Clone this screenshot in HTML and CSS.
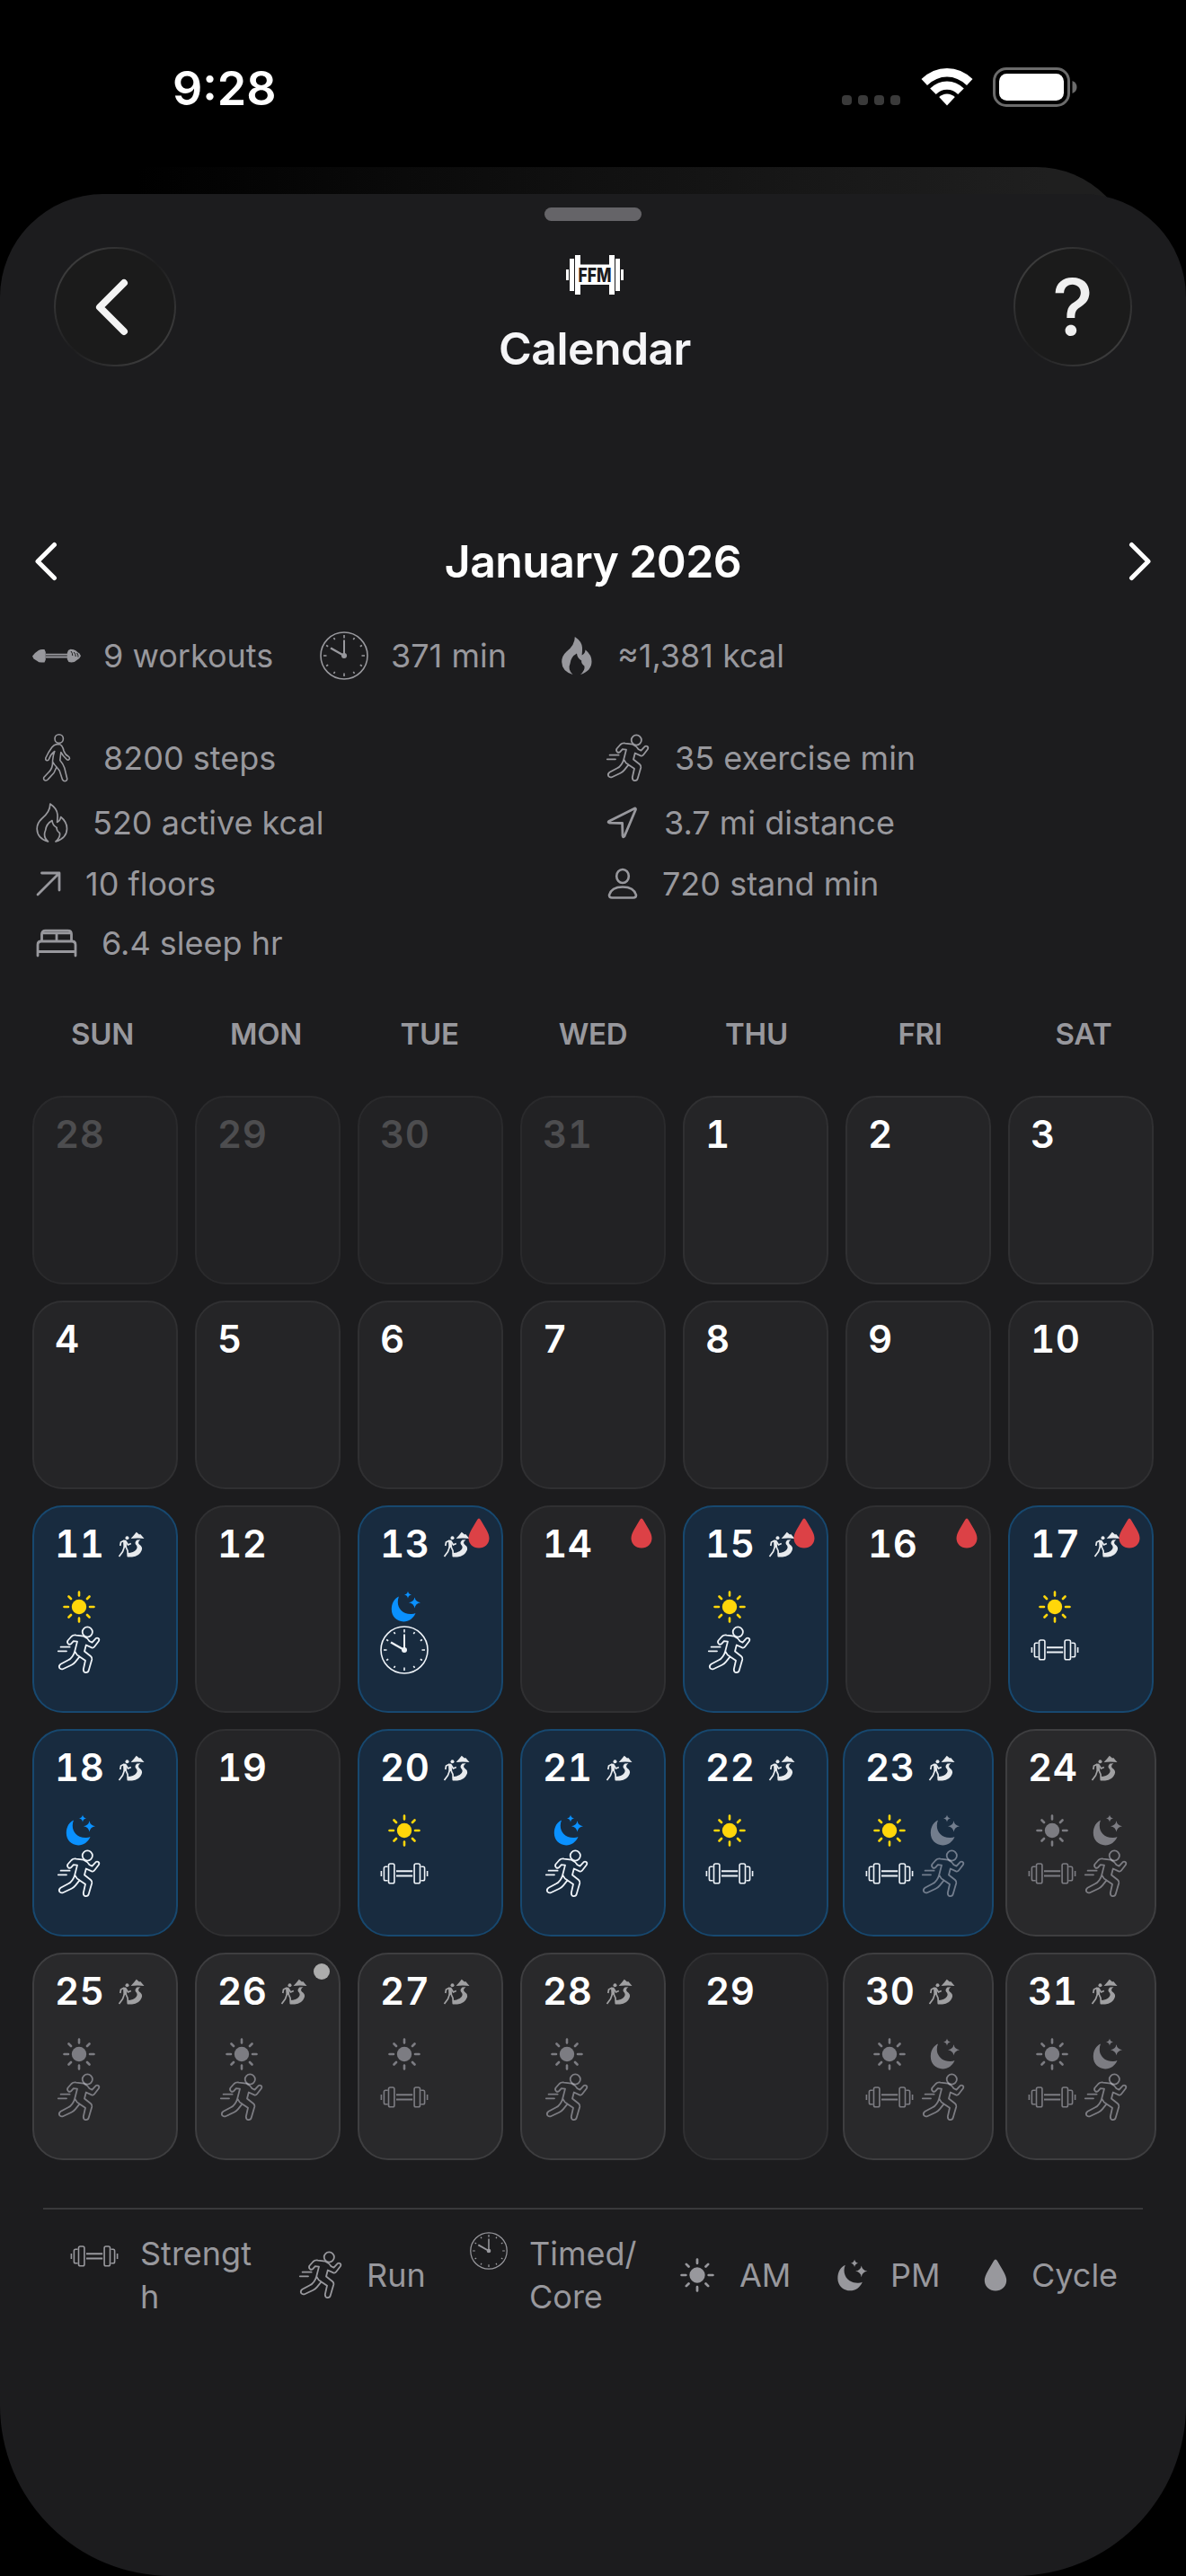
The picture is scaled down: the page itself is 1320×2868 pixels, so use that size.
FILE: index.html
```
<!DOCTYPE html>
<html lang="en">

<head>
    <meta charset="UTF-8">
    <meta name="viewport" content="width=device-width, initial-scale=1.0">
    <title>Calendar</title>
    <link rel="stylesheet" href="styles.css">
</head>

<body>

    <!-- icon set -->
    <svg class="sprite" xmlns="http://www.w3.org/2000/svg">
        <symbol id="run" viewBox="0 0 54 54">
            <g fill="none" stroke="currentColor" stroke-width="1.8" stroke-linejoin="round" stroke-linecap="round">
                <circle cx="36.3" cy="7" r="5.6" />
                <path d="M32 11.6 L24 10.6 Q20.500 10 18.500 12 L14.500 16.500 Q13.300 18.600 15 20.200 Q16.800 21.600 18.400 19.800 L20.800 17.200 L25 17.600 L22.200 28.500 Q21.500 31.500 19.500 34.200 Q17.500 37.200 14.500 38.500 L6.500 42.800 Q4 44.500 5.200 47 Q6.800 49.200 9.500 48 L18.500 43.800 Q21 42.600 22.800 40.400 L27.600 34.400 M22.600 29 Q24 32.600 27.600 34.400 L34 38.800 L31.800 48.500 Q31.800 52 34.600 52.200 Q37.200 52 37.800 49.500 L41.300 37.500 Q41.700 35.500 40 34 L33 28.500 L34.800 21.500 L41 24.400 Q42.800 25 44 23.500 L49 17 Q50 14.800 48 13.800 Q46 13.200 45 14.800 L41.500 18.600 L38.600 17.200 Q36.500 13.500 32 11.600" />
                <path d="M6.600 23.700 H16.600 M3.800 28.300 H13" />
            </g>
        </symbol>
        <symbol id="walk" viewBox="0 0 54 54">
            <g fill="none" stroke="currentColor" stroke-width="1.6" stroke-linejoin="round" stroke-linecap="round">
                <circle cx="29.700" cy="5.500" r="4.700" />
                <path d="M27 11.600 Q24 12 21.800 15 Q18 20 14.800 27 Q14.500 29.600 16.500 29.800 Q18 29.800 18.600 28 Q20.500 22.500 24.800 19.500 Q23 24 22.600 29.500 L22.400 34.500 Q21.500 40 17.500 43.500 L12.800 48.500 Q12 51.500 14.600 52 Q16.400 52.200 17.500 50.600 L24 43.500 L27 37 L30.200 41 L33.500 51 Q34.800 53.200 37 52.600 Q39.200 51.800 38.600 49.500 L35.800 38 Q34 33 30.800 29.500 L31.800 20.500 L34.500 24.500 L38.500 28.800 Q40.600 29.800 41.400 27.800 Q41.600 26.300 40.500 25.400 Q36.500 23.500 35 19 Q33.500 12 29.500 11.500 Z M22.600 31 Q24 34 27 37" />
            </g>
        </symbol>
        <symbol id="clock" viewBox="0 0 54 54">
            <g fill="none" stroke="currentColor" stroke-width="1.6">
                <circle cx="27" cy="27" r="26" />
                <path d="M27 4 V7.500 M27 46.500 V50 M4 27 H7.500 M46.500 27 H50 M15.500 7.100 L16.700 9.200 M37.300 44.800 L38.500 46.900 M7.100 15.500 L9.200 16.700 M44.800 37.300 L46.900 38.500 M38.500 7.100 L37.300 9.200 M16.700 44.800 L15.500 46.900 M46.900 15.500 L44.800 16.700 M9.200 37.300 L7.100 38.500" />
                <path d="M27 27 V9.500" stroke-width="2" />
                <path d="M27 27 L12 18.500" stroke-width="2.400" />
            </g>
            <circle cx="27" cy="27" r="3" fill="currentColor" />
        </symbol>
        <symbol id="lift" viewBox="0 0 54 54">
            <g fill="none" stroke="currentColor" stroke-width="1.600">
                <rect x="9.500" y="16" width="6.400" height="21.800" rx="1.800" />
                <rect x="38.100" y="16" width="6.400" height="21.800" rx="1.800" />
                <path d="M8.600 19.200 H6 Q4.400 19.200 4.400 21 V33 Q4.400 34.800 6 34.800 H8.600 M45.400 19.200 H48 Q49.600 19.200 49.600 21 V33 Q49.600 34.800 48 34.800 H45.400 M1.400 24 V30 M52.600 24 V30" />
                <path d="M18 24.200 H36.200 M18 29.600 H36.200" stroke-width="2" />
            </g>
        </symbol>
        <symbol id="dumbbell" viewBox="0 0 54 16">
            <g fill="currentColor">
                <path d="M0 8.500 L3 5 L7 2 Q9 1 11 1 L13.500 1 L14.800 4 V12.500 L13.500 15.500 H10 Q7 15.500 5.500 14 L1.500 11.500 Z" />
                <path d="M15 5.800 H39 V7.400 H15 Z M15 8.600 H39 V10.400 H15 Z" />
                <path d="M40 2 L42.500 .8 L46 1.200 Q49 2 50.500 4.200 L52.500 5.400 L54 8.300 L52.300 11 L49.500 13 Q47 15.600 43.500 15.600 L40.500 15 L38.800 12 V5 Z" />
            </g>
            <path d="M43 3 Q44.800 5 44.800 8 M46.200 4 Q48.300 6 48.300 9 M49.600 5 Q51.200 7 51 9.500" fill="none" stroke="#1c1c1e" stroke-width="1" />
        </symbol>
        <symbol id="flame" viewBox="0 0 36 44">
            <path d="M15.800 1 Q23.500 6 24 13 Q24.200 17 23.600 21.500 Q27 20 27.600 15.500 Q34.500 21 34.500 28.500 Q34.500 39 22 43 Q27.500 38 26.400 33.500 Q22.500 30.500 23.200 27.500 Q18.500 25 18 19.500 Q11.500 23 10.600 30.500 Q7.500 37.500 13.500 43 Q1.500 39.500 1.200 29 Q1 22.500 6.500 17.500 Q16 10 15.800 1 Z" />
        </symbol>
        <symbol id="arrow" viewBox="0 0 28 28">
            <path d="M2 26 L25.500 2.500 M6.500 2 H26 V21" fill="none" stroke="currentColor" stroke-width="2.800" stroke-linecap="round" stroke-linejoin="round" />
        </symbol>
        <symbol id="bed" viewBox="0 0 46 32">
            <g fill="none" stroke="currentColor" stroke-width="2.800" stroke-linecap="round" stroke-linejoin="round">
                <path d="M2 30 V18 Q2 14 6 14 H40 Q44 14 44 18 V30 M2 25.500 H44" />
                <path d="M6.500 13 V6 Q6.500 2.200 10.500 2.200 H35.500 Q39.500 2.200 39.500 6 V13" />
                <path d="M8 4.800 H38 M23 5 V13" />
            </g>
        </symbol>
        <symbol id="nav" viewBox="0 0 34 36">
            <path d="M31.500 2 Q32.800 2 32.400 3.500 L20 33 Q18.500 35 18 32.500 L17.600 18.500 L3.500 18.200 Q1 17.600 3 16.200 Z" fill="none" stroke="currentColor" stroke-width="2.800" stroke-linejoin="round" />
        </symbol>
        <symbol id="person" viewBox="0 0 34 36">
            <g fill="none" stroke="currentColor" stroke-width="2.600">
                <ellipse cx="17" cy="9.500" rx="6.800" ry="7.500" />
                <path d="M5 33.500 Q2 33.500 2 30.500 Q4.500 21.500 17 21.500 Q29.500 21.500 32 30.500 Q32 33.500 29 33.500 Z" />
            </g>
        </symbol>
        <symbol id="sun" viewBox="0 0 36 36">
            <circle cx="18" cy="18" r="8.200" fill="currentColor" />
            <path d="M18 1.500 V5.500 M18 30.500 V34.500 M1.500 18 H6 M30 18 H34.500 M6.500 6.500 L9 9 M27 27 L29.500 29.500 M29.500 6.500 L27 9 M9 27 L6.500 29.500" stroke="currentColor" stroke-width="2.600" stroke-linecap="round" />
        </symbol>
        <symbol id="moon" viewBox="0 0 34 36">
            <g fill="currentColor">
                <path d="M9 6.500 C5 16 11 26.500 23 26 Q25.500 25.800 27.500 25 C25 31 20 34.400 14.200 34.400 C6.500 34.400 .8 28.500 .8 20.800 C.8 14 4 8.600 9 6.500 Z" />
                <path d="M26.500 7.200 Q27.300 12.200 33 13.200 Q27.300 14.200 26.500 19.600 Q25.700 14.200 20 13.200 Q25.700 12.200 26.500 7.200 Z" />
                <path d="M19 .5 Q19.500 4 23 4.600 Q19.500 5.200 19 8.800 Q18.500 5.200 15 4.600 Q18.500 4 19 .5 Z" />
            </g>
        </symbol>
        <symbol id="drop" viewBox="0 0 24 34">
            <path d="M12 .5 Q13 .5 13.800 2 L20 12.500 Q23.500 18.500 23.500 22.500 C23.500 29 18.500 33.500 12 33.500 S.5 29 .5 22.500 Q.5 18.500 4 12.500 L10.200 2 Q11 .5 12 .5 Z" fill="currentColor" />
        </symbol>
        <symbol id="hike" viewBox="0 0 30 30">
            <g fill="currentColor">
                <path d="M14.600 8 L18.200 4 L20.800 .8 L24 3.500 L25.200 3 L29.500 8 Q22 7.200 14.600 8 Z" />
                <path d="M21.500 9.500 L25.500 9.300 Q21.500 12 24 14.500 Q28.500 17.500 26.500 21.500 Q24 27.800 16 28.500 L10.800 28.500 L10.600 24 Q18 24 20.800 20 Q22.800 17 20 14.500 Q18.500 12 21.500 9.500 Z" />
                <circle cx="10.500" cy="7.300" r="2" />
                <path d="M6 9.600 L9.500 9.800 L10.200 17.500 L6.500 18 Z" />
            </g>
            <path d="M6.500 10.500 L3.500 12 L2.800 16 M9 11 L11.500 15 L14.800 13.500 M7.500 17 L5.500 22.500 L1.500 28 M9 17 L11 21.500 L11.500 28" fill="none" stroke="currentColor" stroke-width="1.700" />
        </symbol>
    </svg>

    <div class="statusbar">
        <span class="time">9:28</span>
        <div class="signals">
            <div class="cell-dots"><i></i><i></i><i></i><i></i></div>
            <svg class="wifi" viewBox="0 0 58 42">
                <path d="M29 0 Q45 0 57.500 12 L51 19 Q41 9.500 29 9.500 Q17 9.500 7 19 L.5 12 Q13 0 29 0 Z" fill="#fff" />
                <path d="M29 14.500 Q39.500 14.500 47.800 22.500 L41.200 29 Q36 23.800 29 23.800 Q22 23.800 16.800 29 L10.200 22.500 Q18.500 14.500 29 14.500 Z" fill="#fff" />
                <path d="M29 28.500 Q34 28.500 37.800 32 L29 41.500 L20.200 32 Q24 28.500 29 28.500 Z" fill="#fff" />
            </svg>
            <svg class="battery" viewBox="0 0 94 44">
                <rect x="1.500" y="1.500" width="83" height="41" rx="13.500" fill="none" stroke="#6b6b6b" stroke-width="3" />
                <rect x="7" y="7" width="72" height="30" rx="8.500" fill="#fff" />
                <path d="M88.500 15 Q93.500 17 93.500 22 Q93.500 27 88.500 29 Z" fill="#6b6b6b" />
            </svg>
        </div>
    </div>

    <div class="back-sheet"></div>

    <div class="sheet">
        <div class="handle"></div>

        <div class="header">
            <div class="round wide">
                <svg class="chev-big" viewBox="0 0 38 64"><path d="M33 5 L6 32 L33 59" /></svg>
            </div>
            <div class="brand">
                <svg class="logo" viewBox="0 0 64 44">
                    <path fill="#fff" d="M0 16 H3 V28 H0 Z M4 4 H9 V40 H4 Z M10 0 H16 V10.500 H48 V0 H54 V44 H48 V33 H16 V44 H10 Z M55 4 H60 V40 H55 Z M61 16 H64 V28 H61 Z" />
                    <text x="32" y="30" text-anchor="middle" textLength="37" lengthAdjust="spacingAndGlyphs">FFM</text>
                </svg>
                <h1>Calendar</h1>
            </div>
            <div class="round"><span class="help">?</span></div>
        </div>

        <div class="month">
            <svg class="chev" viewBox="0 0 26 44"><path d="M22.500 3.500 L4 22 L22.500 40.500" /></svg>
            <h2>January 2026</h2>
            <svg class="chev" viewBox="0 0 26 44"><path d="M3.500 3.500 L22 22 L3.500 40.500" /></svg>
        </div>

        <div class="totals">
            <div class="stat box"><svg class="i-dumbbell"><use href="#dumbbell" /></svg><span>9 workouts</span></div>
            <div class="stat box"><svg class="i54"><use href="#clock" /></svg><span>371 min</span></div>
            <div class="stat"><svg class="i-flame solid"><use href="#flame" /></svg><span>≈1,381 kcal</span></div>
        </div>

        <div class="health">
            <div class="stat box"><svg class="i54"><use href="#walk" /></svg><span>8200 steps</span></div>
            <div class="stat box"><svg class="i54"><use href="#run" /></svg><span>35 exercise min</span></div>
            <div class="stat in"><svg class="i-flame line"><use href="#flame" /></svg><span>520 active kcal</span></div>
            <div class="stat nav"><svg class="i-small"><use href="#nav" /></svg><span>3.7 mi distance</span></div>
            <div class="stat in"><svg class="i-arrow"><use href="#arrow" /></svg><span>10 floors</span></div>
            <div class="stat in"><svg class="i-small"><use href="#person" /></svg><span>720 stand min</span></div>
            <div class="stat in"><svg class="i-bed"><use href="#bed" /></svg><span>6.4 sleep hr</span></div>
        </div>

        <div class="weekdays">
            <span>SUN</span><span>MON</span><span>TUE</span><span>WED</span><span>THU</span><span>FRI</span><span>SAT</span>
        </div>

        <div class="grid" id="grid"></div>

        <div class="legend">
            <div class="item"><svg class="i54 top"><use href="#lift" /></svg><span>Strengt<br>h</span></div>
            <div class="item"><svg class="i54"><use href="#run" /></svg><span>Run</span></div>
            <div class="item timed"><svg class="i42 top"><use href="#clock" /></svg><span>Timed/<br>Core</span></div>
            <div class="item am"><svg class="i-sun"><use href="#sun" /></svg><span>AM</span></div>
            <div class="item"><svg class="i-moon"><use href="#moon" /></svg><span>PM</span></div>
            <div class="item cyc"><svg class="i-drop"><use href="#drop" /></svg><span>Cycle</span></div>
        </div>
    </div>

    <script>
        let grid = document.getElementById("grid");

        // workouts: [time of day, type, "plan" when not done yet]
        let days = {
            11: { done: true, work: [["sun", "run"]] },
            13: { done: true, cycle: true, work: [["moon", "clock"]] },
            14: { cycle: true },
            15: { done: true, cycle: true, work: [["sun", "run"]] },
            16: { cycle: true },
            17: { done: true, cycle: true, work: [["sun", "lift"]] },
            18: { done: true, work: [["moon", "run"]] },
            20: { done: true, work: [["sun", "lift"]] },
            21: { done: true, work: [["moon", "run"]] },
            22: { done: true, work: [["sun", "lift"]] },
            23: { done: true, work: [["sun", "lift"], ["moon", "run", "plan"]] },
            24: { work: [["sun", "lift", "plan"], ["moon", "run", "plan"]] },
            25: { work: [["sun", "run", "plan"]] },
            26: { today: true, work: [["sun", "run", "plan"]] },
            27: { work: [["sun", "lift", "plan"]] },
            28: { work: [["sun", "run", "plan"]] },
            30: { work: [["sun", "lift", "plan"], ["moon", "run", "plan"]] },
            31: { work: [["sun", "lift", "plan"], ["moon", "run", "plan"]] }
        };

        function icon(name, cls) {
            return `<svg class="${cls}"><use href="#${name}" /></svg>`;
        }

        function addDay(num, day, out) {
            let cls = "day";
            if (out) cls += " out";
            if (day.done) cls += " done";
            else if (day.work) cls += " planned";
            if (day.work && day.work.length > 1) cls += " double";

            let html = `<div class="top-row"><b>${num}</b>${day.work ? icon("hike", "hike") : ""}</div>`;
            if (day.work) {
                html += `<div class="works">`;
                day.work.forEach(function(w) {
                    html += `<div class="work ${w[2] || ""}">${icon(w[0], w[0])}${icon(w[1], "i54")}</div>`;
                });
                html += `</div>`;
            }
            if (day.cycle) html += icon("drop", "cycle");
            if (day.today) html += `<i class="dot"></i>`;
            grid.innerHTML += `<div class="${cls}">${html}</div>`;
        }

        for (let i = 28; i <= 31; i++) addDay(i, {}, true);
        for (let i = 1; i <= 31; i++) addDay(i, days[i] || {}, false);
    </script>
</body>

</html>
```
FILE: styles.css
```
* {
    margin: 0;
    padding: 0;
    box-sizing: border-box;
}

body {
    width: 1320px;
    height: 2868px;
    overflow: hidden;
    background: #000;
    color: #fff;
    font-family: Inter, "Liberation Sans", sans-serif;
}

svg {
    display: block;
    flex: none;
}

.sprite {
    width: 0;
    height: 0;
    position: absolute;
}

/* status bar */
.statusbar {
    height: 186px;
    padding: 68px 121px 58px 192px;
    display: flex;
    justify-content: space-between;
    align-items: center;
}

.time {
    font-size: 52px;
    font-weight: 600;
}

.signals {
    display: flex;
    align-items: center;
    margin-top: -3px;
}

.cell-dots {
    display: flex;
    gap: 7px;
    margin: 30px 23px 0 0;
}

.cell-dots i {
    width: 11px;
    height: 11px;
    border-radius: 4px;
    background: #3a3a3a;
}

.wifi {
    width: 58px;
    height: 42px;
    margin-right: 22px;
}

.battery {
    width: 94px;
    height: 44px;
}

/* sheets */
.back-sheet {
    height: 130px;
    margin: 0 57px;
    border-radius: 110px 110px 0 0;
    background: linear-gradient(90deg, #000 8%, #0d0d0d 40%, #1f1f1f 92%);
}

.sheet {
    position: relative;
    height: 2652px;
    margin-top: -100px;
    padding-top: 15px;
    border-radius: 115px 115px 190px 190px;
    background: #1c1c1e;
}

.handle {
    width: 108px;
    height: 15px;
    margin: 0 auto;
    border-radius: 8px;
    background: #656468;
}

.header {
    height: 143px;
    margin-top: 29px;
    padding: 0 60px;
    display: flex;
    justify-content: space-between;
}

.round {
    width: 132px;
    height: 133px;
    border-radius: 67px;
    border: 2px solid transparent;
    background: linear-gradient(#1b1b1b, #1b1b1b) padding-box, linear-gradient(135deg, #444 5%, #2a2a2b 35%, #1e1e1f 50%, #2a2a2b 65%, #444 95%) border-box;
    display: flex;
    justify-content: center;
    align-items: center;
}

.round.wide {
    width: 136px;
}

.chev-big {
    width: 38px;
    height: 64px;
    margin-right: 9px;
    fill: none;
    stroke: #f4f4f4;
    stroke-width: 8;
    stroke-linecap: round;
    stroke-linejoin: round;
}

.help {
    font-size: 86px;
    font-weight: 500;
    color: #f0f0f0;
}

.brand {
    display: flex;
    flex-direction: column;
    align-items: center;
    padding-top: 9px;
}

.logo {
    width: 64px;
    height: 44px;
}

.logo text {
    font-size: 22px;
    font-weight: 800;
    fill: #1c1c1e;
}

h1,
h2 {
    font-size: 50px;
    line-height: 60px;
    font-weight: 600;
    letter-spacing: -0.6px;
}

h1 {
    margin-top: 30px;
    color: #f5f5f7;
}

.month {
    height: 60px;
    margin-top: 177px;
    padding: 0 38px;
    display: flex;
    justify-content: space-between;
    align-items: center;
}

.chev {
    width: 26px;
    height: 44px;
    fill: none;
    stroke: #fff;
    stroke-width: 5;
    stroke-linecap: round;
    stroke-linejoin: round;
}

/* stats */
.totals {
    height: 54px;
    margin: 48px 36px 0;
    display: grid;
    grid-template-columns: 320px 268px auto;
}

.health {
    margin: 60px 36px 0;
    display: grid;
    grid-template-columns: 636px auto;
    grid-template-rows: 54px 48px 45px 45px;
    row-gap: 21px;
}

.stat {
    display: flex;
    align-items: center;
    gap: 27px;
    font-size: 36px;
    color: #98989d;
    white-space: nowrap;
}

.stat.box {
    gap: 25px;
}

.stat.in {
    padding-left: 4px;
}

.stat.nav {
    padding-left: 3px;
    gap: 30px;
}

.i54 {
    width: 54px;
    height: 54px;
}

.i42 {
    width: 42px;
    height: 42px;
}

.i-dumbbell {
    width: 54px;
    height: 16px;
}

.i-flame {
    width: 36px;
    height: 44px;
}

.solid {
    fill: currentColor;
}

.line {
    fill: none;
    stroke: currentColor;
    stroke-width: 1.7;
    stroke-linejoin: round;
}

.i-small {
    width: 34px;
    height: 36px;
}

.i-arrow {
    width: 28px;
    height: 28px;
}

.i-bed {
    width: 46px;
    height: 32px;
}

/* calendar */
.weekdays {
    margin: 59px 23px 0;
    display: grid;
    grid-template-columns: repeat(7, 1fr);
    text-align: center;
    font-size: 33px;
    line-height: 40px;
    font-weight: 600;
    letter-spacing: -0.3px;
    color: #98989d;
}

.grid {
    margin: 49px 36px 0;
    display: grid;
    grid-template-columns: repeat(7, 162px);
    grid-template-rows: 210px 210px 231px 231px 231px;
    justify-content: space-between;
    row-gap: 18px;
}

.day {
    position: relative;
    padding: 18px 0 0 23px;
    border: 2px solid #303032;
    border-radius: 34px;
    background: #252527;
}

.day b {
    font-size: 42px;
    line-height: 46px;
    font-weight: 600;
    font-variant-numeric: tabular-nums;
    letter-spacing: 0.5px;
}

.out {
    background: #222224;
    border-color: #2a2a2c;
}

.out b {
    color: #4d4d4f;
}

.done {
    background: #182b3f;
    border-color: #17486f;
}

.planned {
    background: #29292b;
    border-color: #3e3e40;
}

.double {
    margin: 0 -3px;
}

.top-row {
    height: 46px;
    display: flex;
    align-items: center;
    justify-content: space-between;
    padding-right: 35px;
}

.double .top-row {
    padding-right: 41px;
}

.hike {
    width: 30px;
    height: 30px;
    margin-top: 2px;
    color: #e8ebee;
}

.planned .hike {
    color: #a0a0a2;
}

.works {
    margin-top: 29px;
    display: flex;
    gap: 6px;
}

.work {
    width: 54px;
    display: flex;
    flex-direction: column;
    align-items: center;
    gap: 3px;
    color: #eef3f8;
}

.sun {
    width: 36px;
    height: 36px;
    color: #ffd60a;
}

.moon {
    width: 34px;
    height: 36px;
    margin-left: 4px;
    color: #0a91ff;
}

.plan,
.plan .sun,
.plan .moon {
    color: rgba(235, 235, 245, 0.43);
}

.cycle {
    position: absolute;
    top: 12px;
    right: 13px;
    width: 24px;
    height: 34px;
    color: #dc4146;
}

.dot {
    position: absolute;
    top: 10px;
    right: 10px;
    width: 18px;
    height: 18px;
    border-radius: 50%;
    background: #acacac;
}

/* legend */
.legend {
    height: 148px;
    margin: 53px 48px 0;
    padding-left: 30px;
    border-top: 2px solid #39393b;
    display: grid;
    grid-template-columns: 252px 193px 234px 174px 164px auto;
    align-items: center;
}

.item {
    display: flex;
    align-items: center;
    gap: 24px;
    font-size: 36px;
    line-height: 48px;
    color: #98989d;
}

.item.am {
    gap: 28px;
}

.item.cyc {
    gap: 27px;
}

.top {
    align-self: flex-start;
}

.i-sun {
    width: 38px;
    height: 38px;
}

.i-moon {
    width: 36px;
    height: 37px;
}

.i-drop {
    width: 26px;
    height: 36px;
}
```
